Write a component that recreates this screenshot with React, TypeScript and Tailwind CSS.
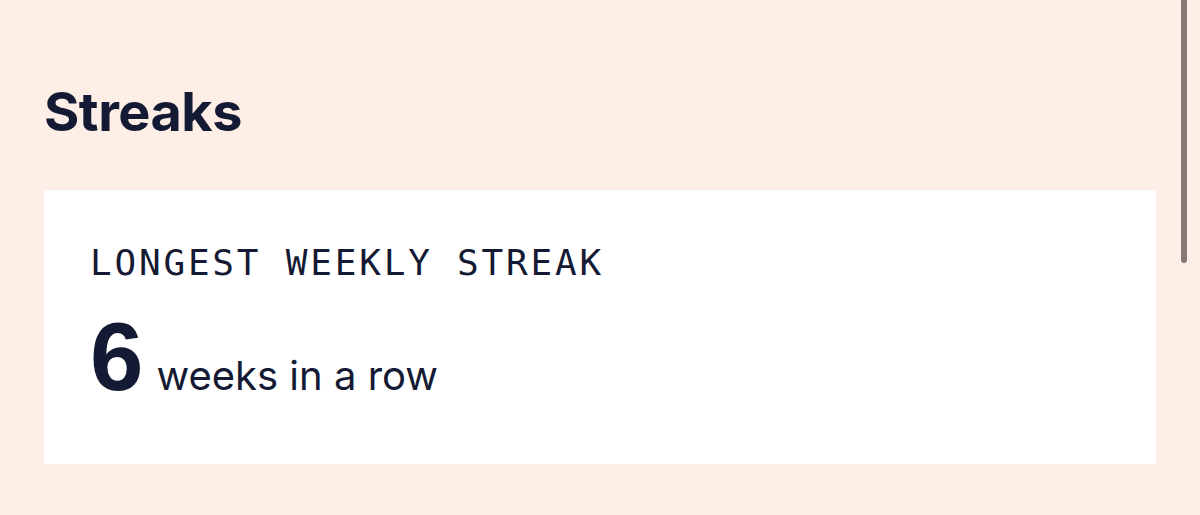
import React from 'react';

const ink = 'text-[#141a33]';

export default function App() {
  return (
    <div className="relative h-[515px] w-[1200px] overflow-hidden bg-[#fdefe5]">
      <div className="pl-[44px] pr-[44px] pt-[85px]">
        <h2 className={`${ink} font-['Inter',sans-serif] text-[54px] font-bold leading-none tracking-[-0.5px]`}>
          Streaks
        </h2>
        <div className="mt-[51px] h-[274px] w-[1112px] bg-white px-[46px] pt-[55px]">
          <div className={`${ink} font-['DejaVu_Sans_Mono',monospace] text-[36px] leading-none tracking-[2.8px]`}>
            LONGEST WEEKLY STREAK
          </div>
          <div className="mt-[28px] flex items-baseline gap-[13px]">
            <span className={`${ink} font-['Liberation_Sans',sans-serif] text-[96px] font-bold leading-none`}>6</span>
            <span className={`${ink} font-['Inter',sans-serif] text-[40px] leading-none`}>weeks in a row</span>
          </div>
        </div>
      </div>
      {/* scrollbar thumb */}
      <div className="absolute right-[13px] top-0 h-[263px] w-[6px] rounded-b-full bg-[#857b76]" />
    </div>
  );
}
